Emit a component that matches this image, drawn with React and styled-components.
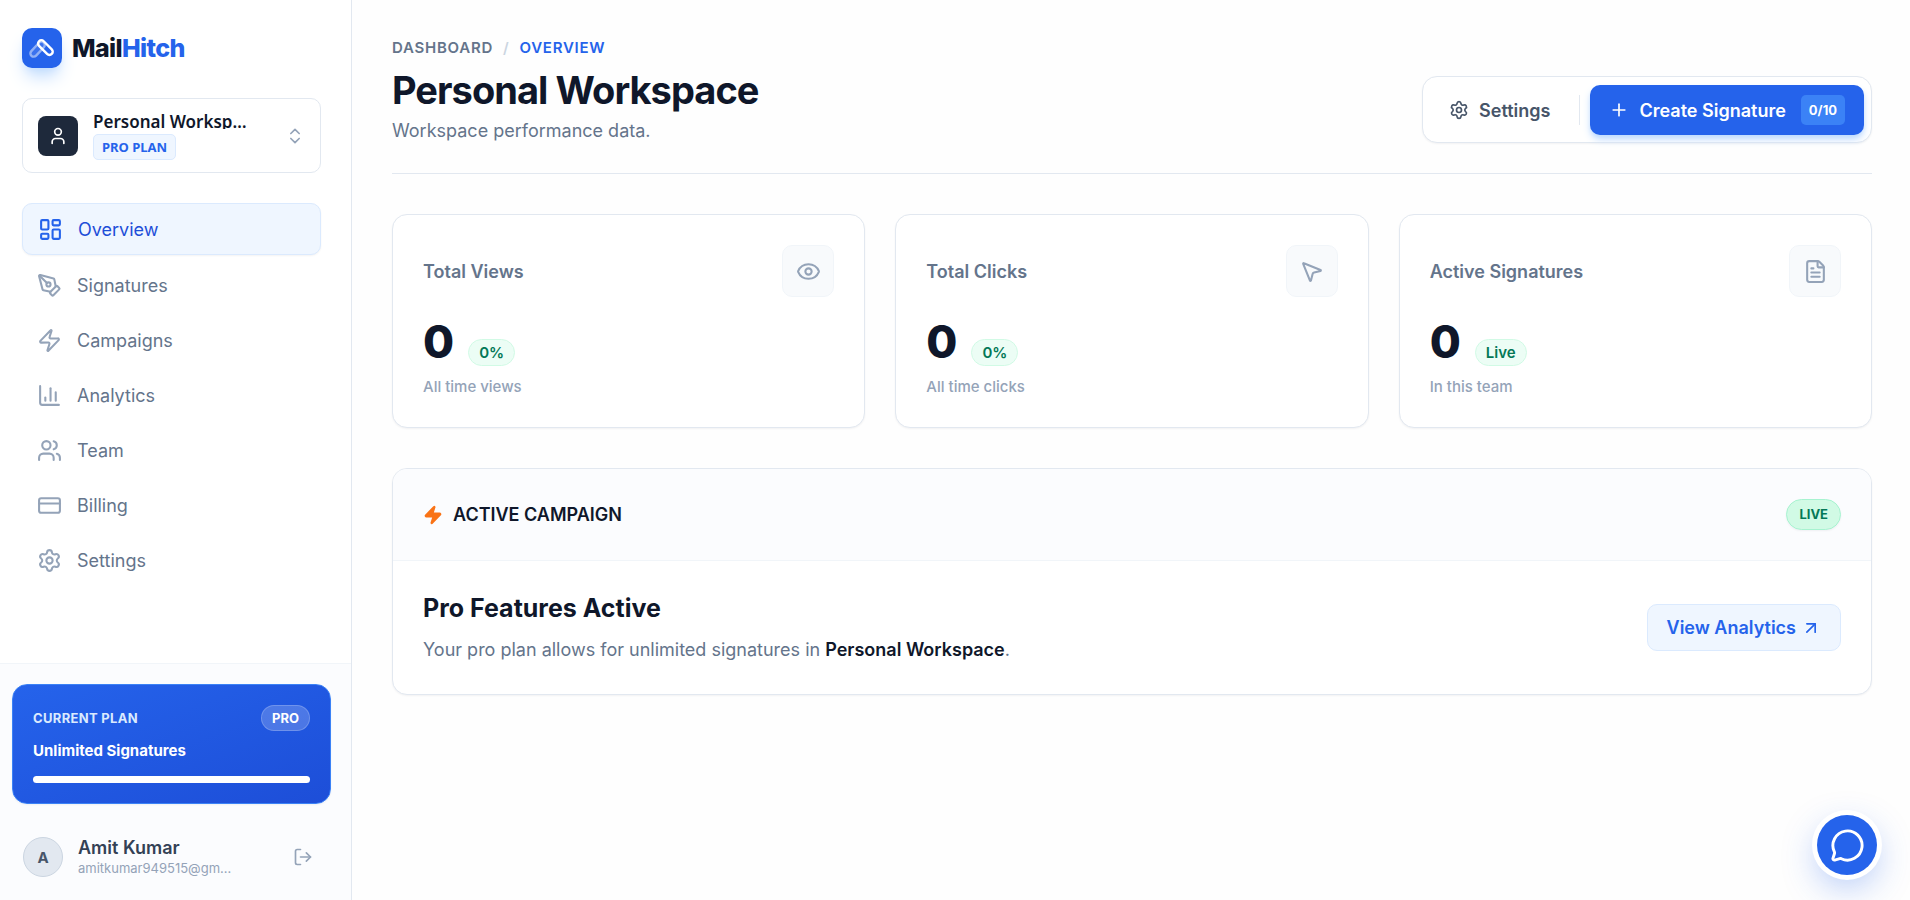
import styled, { createGlobalStyle } from "styled-components";
import {
    ArrowUpRight,
    ChartColumn,
    ChevronsUpDown,
    CreditCard,
    Eye,
    FileText,
    LayoutDashboard,
    LogOut,
    MessageCircle,
    MousePointer2,
    PenTool,
    Plus,
    Settings,
    User,
    Users,
    Zap
} from "lucide-react";

const GlobalStyle = createGlobalStyle`
    * {
        box-sizing: border-box;
    }
    body {
        margin: 0;
        background-color: #fefefe;
        color: #0f172a;
        font-family: Inter, "Liberation Sans", sans-serif;
        font-size: 18px;
    }
    h1, h2, h3, p {
        margin: 0;
    }
    a {
        color: inherit;
        text-decoration: none;
    }
    button {
        font: inherit;
        cursor: pointer;
    }
`

const Layout = styled.div`
    display: flex;
    min-height: 100vh;
`

const Sidebar = styled.aside`
    display: flex;
    flex-direction: column;
    flex-shrink: 0;
    width: 352px;
    background-color: white;
    border-right: 1px solid #e2e8f0;
`

const SidebarTop = styled.div`
    display: flex;
    flex-direction: column;
    gap: 30px;
    flex: 1;
    padding: 28px 30px 20px 22px;
`

const Brand = styled.a`
    display: flex;
    align-items: center;
    gap: 10px;
    font-size: 25px;
    font-weight: 800;
    letter-spacing: -0.025em;
    line-height: 40px;
    span {
        color: #2563eb;
    }
`

const BrandMark = styled.div`
    display: flex;
    align-items: center;
    justify-content: center;
    width: 40px;
    height: 40px;
    border-radius: 10px;
    background-color: #2563eb;
    box-shadow: 0 12px 18px -4px #bfdbfe, 0 5px 8px -5px #bfdbfe;
`

const Switcher = styled.button`
    display: flex;
    align-items: center;
    width: 100%;
    height: 75px;
    padding: 0 15px;
    background-color: white;
    border: 1px solid #e2e8f0;
    border-radius: 10px;
    text-align: left;
    color: #94a3b8;
`

const SwitcherIcon = styled.span`
    display: flex;
    align-items: center;
    justify-content: center;
    width: 40px;
    height: 40px;
    margin-right: 15px;
    border-radius: 8px;
    background-color: #1e293b;
    color: white;
`

const SwitcherInfo = styled.span`
    display: flex;
    flex-direction: column;
    align-items: flex-start;
    gap: 5px;
    flex: 1;
    font-family: "Noto Sans", "Open Sans", sans-serif;
`

const SwitcherName = styled.span`
    width: 160px;
    height: 18px;
    overflow: hidden;
    white-space: nowrap;
    text-overflow: ellipsis;
    font-size: 17px;
    font-weight: 600;
    line-height: 21px;
    color: #0f172a;
`

const PlanChip = styled.span`
    padding: 0 8px;
    border: 1px solid #dbeafe;
    border-radius: 5px;
    background-color: #eff6ff;
    color: #2563eb;
    font-size: 13px;
    font-weight: 700;
    line-height: 24px;
`

const Nav = styled.nav`
    display: flex;
    flex-direction: column;
    gap: 5px;
`

const NavItem = styled.a`
    display: flex;
    align-items: center;
    gap: 15px;
    height: 50px;
    padding: 0 15px;
    border-radius: 10px;
    color: #64748b;
    svg {
        color: #94a3b8;
    }
    &[aria-current] {
        height: 52px;
        background-color: #eff6ff;
        border: 1px solid #dbeafe;
        box-shadow: 0 1px 2px rgba(15, 23, 42, 0.05);
        color: #1d4ed8;
        svg {
            color: #2563eb;
        }
    }
`

const SidebarFooter = styled.div`
    padding: 20px 20px 23px 12px;
    background-color: #fbfcfe;
    border-top: 1px solid #f1f5f9;
`

const PlanCard = styled.section`
    padding: 20px;
    border: 1px solid #3b82f6;
    border-radius: 15px;
    background: linear-gradient(to bottom right, #2563eb, #1d4ed8);
    box-shadow: 0 1px 2px rgba(15, 23, 42, 0.05);
    color: white;
`

const PlanHead = styled.div`
    display: flex;
    align-items: center;
    justify-content: space-between;
    font-size: 13px;
    font-weight: 700;
    line-height: 24px;
`

const PlanLabel = styled.span`
    color: #dbeafe;
    letter-spacing: 0.025em;
`

const PlanPill = styled.span`
    padding: 0 10px;
    border: 1px solid rgba(255, 255, 255, 0.2);
    border-radius: 20px;
    background-color: rgba(255, 255, 255, 0.2);
`

const PlanText = styled.p`
    margin: 8px 0 13px;
    font-size: 15px;
    font-weight: 700;
    line-height: 24px;
`

const PlanBar = styled.div`
    height: 7px;
    border-radius: 5px;
    background-color: white;
`

const Account = styled.div`
    display: flex;
    align-items: center;
    gap: 15px;
    padding: 33px 18px 0 11px;
`

const Avatar = styled.div`
    display: flex;
    align-items: center;
    justify-content: center;
    width: 40px;
    height: 40px;
    border: 1px solid #cbd5e1;
    border-radius: 50%;
    background-color: #e2e8f0;
    color: #475569;
    font-size: 15px;
    font-weight: 700;
`

const AccountInfo = styled.div`
    flex: 1;
    min-width: 0;
    p {
        width: 155px;
        overflow: hidden;
        white-space: nowrap;
        text-overflow: ellipsis;
        font-weight: 600;
        line-height: 22px;
        color: #334155;
    }
    p:last-child {
        font-size: 13px;
        font-weight: 400;
        line-height: 18px;
        color: #94a3b8;
    }
`

const IconButton = styled.button`
    display: flex;
    padding: 0;
    border: none;
    background: none;
    color: #94a3b8;
`

const Main = styled.main`
    flex: 1;
    min-width: 0;
    padding: 38px 38px 38px 40px;
`

const Header = styled.header`
    display: flex;
    align-items: flex-end;
    justify-content: space-between;
    padding-bottom: 30px;
    margin-bottom: 40px;
    border-bottom: 1px solid #e2e8f0;
`

const Breadcrumb = styled.nav`
    display: flex;
    gap: 10px;
    font-size: 15px;
    font-weight: 600;
    letter-spacing: 0.05em;
    line-height: 20px;
    color: #64748b;
    span {
        color: #cbd5e1;
    }
    a[aria-current] {
        color: #2563eb;
    }
`

const Title = styled.h1`
    margin: 10px 0 6px;
    font-size: 38px;
    font-weight: 700;
    letter-spacing: -0.025em;
    line-height: 45px;
`

const Subtitle = styled.p`
    line-height: 24px;
    color: #64748b;
`

const Actions = styled.div`
    display: flex;
    align-items: center;
    gap: 10px;
    padding: 8px 7px 7px;
    background-color: white;
    border: 1px solid #e2e8f0;
    border-radius: 15px;
    box-shadow: 0 1px 2px rgba(15, 23, 42, 0.05);
`

const Divider = styled.div`
    width: 1px;
    height: 30px;
    background-color: #e2e8f0;
`

const ActionButton = styled.button`
    display: flex;
    align-items: center;
    gap: 10px;
    height: 50px;
    padding: 0 19px;
    border: none;
    border-radius: 10px;
    background-color: transparent;
    color: #475569;
    font-weight: 600;
`

const PrimaryButton = styled(ActionButton)`
    background-color: #2563eb;
    box-shadow: 0 5px 8px -1px #bfdbfe, 0 3px 5px -2px #bfdbfe;
    color: white;
`

const Quota = styled.span`
    margin-left: 5px;
    padding: 0 8px;
    border-radius: 5px;
    background-color: #3b82f6;
    font-size: 13px;
    font-weight: 700;
    line-height: 30px;
`

const StatGrid = styled.div`
    display: grid;
    grid-template-columns: repeat(3, 1fr);
    gap: 30px;
    margin-bottom: 40px;
`

const Card = styled.section`
    background-color: white;
    border: 1px solid #e2e8f0;
    border-radius: 15px;
    box-shadow: 0 1px 2px rgba(15, 23, 42, 0.05);
    overflow: hidden;
`

const StatCard = styled(Card)`
    padding: 30px;
`

const StatHead = styled.div`
    display: flex;
    align-items: center;
    justify-content: space-between;
    margin-bottom: 20px;
    h2 {
        font-size: 18px;
        font-weight: 600;
        color: #64748b;
    }
`

const StatIcon = styled.div`
    display: flex;
    align-items: center;
    justify-content: center;
    width: 52px;
    height: 52px;
    border: 1px solid #f1f5f9;
    border-radius: 10px;
    background-color: #f8fafc;
    color: #94a3b8;
`

const StatValue = styled.div`
    display: flex;
    align-items: baseline;
    gap: 14px;
    font-size: 45px;
    font-weight: 800;
    line-height: 50px;
`

const StatPill = styled.span`
    padding: 0 10px;
    border: 1px solid #d1fae5;
    border-radius: 20px;
    background-color: #ecfdf5;
    color: #047857;
    font-size: 15px;
    font-weight: 600;
    line-height: 25px;
`

const StatCaption = styled.p`
    margin-top: 10px;
    font-size: 15px;
    font-weight: 500;
    line-height: 20px;
    color: #94a3b8;
`

const CampaignHead = styled.div`
    display: flex;
    align-items: center;
    justify-content: space-between;
    padding: 30px;
    background-color: #fbfcfe;
    border-bottom: 1px solid #f1f5f9;
    h2 {
        display: flex;
        align-items: center;
        gap: 10px;
        font-size: 18px;
        font-weight: 600;
    }
`

const LivePill = styled.span`
    padding: 0 12px;
    border: 1px solid #a7f3d0;
    border-radius: 20px;
    background-color: #d1fae5;
    box-shadow: 0 1px 2px rgba(15, 23, 42, 0.05);
    color: #047857;
    font-size: 13px;
    font-weight: 700;
    line-height: 29px;
`

const CampaignBody = styled.div`
    display: flex;
    align-items: center;
    justify-content: space-between;
    padding: 30px;
    h3 {
        margin-bottom: 10px;
        font-size: 25px;
        font-weight: 700;
        line-height: 35px;
    }
    p {
        line-height: 28px;
        color: #64748b;
    }
    strong {
        font-weight: 600;
        color: #0f172a;
    }
`

const AnalyticsLink = styled.a`
    display: flex;
    align-items: center;
    gap: 5px;
    height: 47px;
    padding: 0 19px;
    border: 1px solid #dbeafe;
    border-radius: 10px;
    background-color: #eff6ff;
    color: #2563eb;
    font-weight: 600;
`

const ChatButton = styled.button`
    position: fixed;
    right: 33px;
    bottom: 25px;
    display: flex;
    align-items: center;
    justify-content: center;
    width: 60px;
    height: 60px;
    padding: 0;
    border: none;
    border-radius: 50%;
    background-color: #2563eb;
    box-shadow: 0 0 0 5px white, 0 12px 35px rgba(37, 99, 235, 0.35);
    color: white;
`

const navItems = [
    { label: "Overview", Icon: LayoutDashboard, current: true },
    { label: "Signatures", Icon: PenTool },
    { label: "Campaigns", Icon: Zap },
    { label: "Analytics", Icon: ChartColumn },
    { label: "Team", Icon: Users },
    { label: "Billing", Icon: CreditCard },
    { label: "Settings", Icon: Settings }
];

const stats = [
    { label: "Total Views", Icon: Eye, value: 0, pill: "0%", caption: "All time views" },
    { label: "Total Clicks", Icon: MousePointer2, value: 0, pill: "0%", caption: "All time clicks" },
    { label: "Active Signatures", Icon: FileText, value: 0, pill: "Live", caption: "In this team" }
];

const LogoGlyph = () => (
    <svg width="26" height="26" viewBox="0 0 26 26" fill="none" strokeWidth="2.4">
        <rect x="-3.3" y="-9" width="6.6" height="18" rx="3.3" transform="translate(8.6 14.2) rotate(43)" stroke="#92b1f5" fill="#3b72ee" />
        <rect x="-3.3" y="-9" width="6.6" height="18" rx="3.3" transform="translate(16.4 12.6) rotate(-45)" stroke="white" />
    </svg>
)

const App = () => {
    return (
        <Layout>
            <GlobalStyle />
            <Sidebar>
                <SidebarTop>
                    <Brand href="#">
                        <BrandMark><LogoGlyph /></BrandMark>
                        <div>Mail<span>Hitch</span></div>
                    </Brand>
                    <Switcher type="button">
                        <SwitcherIcon><User size={20} /></SwitcherIcon>
                        <SwitcherInfo>
                            <SwitcherName>Personal Workspace</SwitcherName>
                            <PlanChip>PRO PLAN</PlanChip>
                        </SwitcherInfo>
                        <ChevronsUpDown size={20} />
                    </Switcher>
                    <Nav aria-label="Main">
                        {navItems.map(({ label, Icon, current }) => (
                            <NavItem key={label} href="#" aria-current={current ? "page" : undefined}>
                                <Icon size={25} />
                                {label}
                            </NavItem>
                        ))}
                    </Nav>
                </SidebarTop>
                <SidebarFooter>
                    <PlanCard>
                        <PlanHead>
                            <PlanLabel>CURRENT PLAN</PlanLabel>
                            <PlanPill>PRO</PlanPill>
                        </PlanHead>
                        <PlanText>Unlimited Signatures</PlanText>
                        <PlanBar />
                    </PlanCard>
                    <Account>
                        <Avatar>A</Avatar>
                        <AccountInfo>
                            <p>Amit Kumar</p>
                            <p>amitkumar949515@gmail.com</p>
                        </AccountInfo>
                        <IconButton type="button" aria-label="Log out">
                            <LogOut size={20} />
                        </IconButton>
                    </Account>
                </SidebarFooter>
            </Sidebar>
            <Main>
                <Header>
                    <div>
                        <Breadcrumb aria-label="Breadcrumb">
                            <a href="#">DASHBOARD</a>
                            <span>/</span>
                            <a href="#" aria-current="page">OVERVIEW</a>
                        </Breadcrumb>
                        <Title>Personal Workspace</Title>
                        <Subtitle>Workspace performance data.</Subtitle>
                    </div>
                    <Actions>
                        <ActionButton type="button">
                            <Settings size={20} />
                            Settings
                        </ActionButton>
                        <Divider />
                        <PrimaryButton type="button">
                            <Plus size={20} />
                            Create Signature
                            <Quota>0/10</Quota>
                        </PrimaryButton>
                    </Actions>
                </Header>
                <StatGrid>
                    {stats.map(({ label, Icon, value, pill, caption }) => (
                        <StatCard key={label}>
                            <StatHead>
                                <h2>{label}</h2>
                                <StatIcon><Icon size={25} /></StatIcon>
                            </StatHead>
                            <StatValue>
                                {value}
                                <StatPill>{pill}</StatPill>
                            </StatValue>
                            <StatCaption>{caption}</StatCaption>
                        </StatCard>
                    ))}
                </StatGrid>
                <Card>
                    <CampaignHead>
                        <h2>
                            <Zap size={20} color="#f97316" fill="#f97316" />
                            ACTIVE CAMPAIGN
                        </h2>
                        <LivePill>LIVE</LivePill>
                    </CampaignHead>
                    <CampaignBody>
                        <div>
                            <h3>Pro Features Active</h3>
                            <p>Your pro plan allows for unlimited signatures in <strong>Personal Workspace</strong>.</p>
                        </div>
                        <AnalyticsLink href="#">
                            View Analytics
                            <ArrowUpRight size={20} />
                        </AnalyticsLink>
                    </CampaignBody>
                </Card>
            </Main>
            <ChatButton type="button" aria-label="Open chat">
                <MessageCircle size={35} />
            </ChatButton>
        </Layout>
    )
}
export default App;
